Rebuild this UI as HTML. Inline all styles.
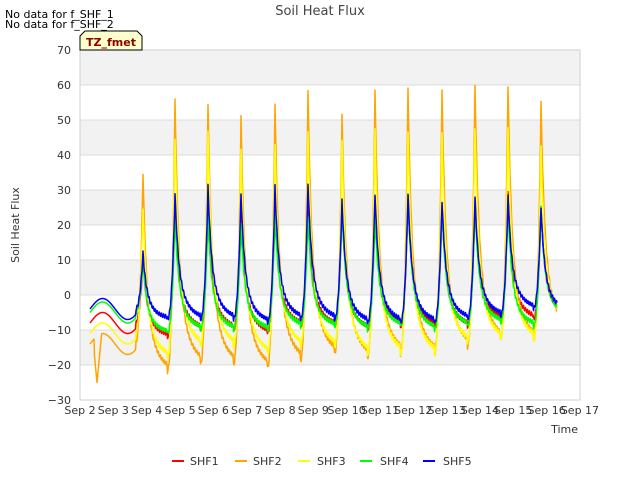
<!DOCTYPE html><html><head><style>body{margin:0;background:#fff}svg{font-family:"DejaVu Sans","Liberation Sans",sans-serif}</style></head><body>
<svg id="s" width="640" height="480" xmlns="http://www.w3.org/2000/svg">
<rect x="80" y="50" width="500" height="350" fill="#fff"/>
<g fill="#f2f2f2"><rect x="80" y="50" width="500" height="35"/><rect x="80" y="120" width="500" height="35"/><rect x="80" y="190" width="500" height="35"/><rect x="80" y="260" width="500" height="35"/><rect x="80" y="330" width="500" height="35"/></g>
<g stroke="#dcdcdc" stroke-width="1"><line x1="80" x2="580" y1="85" y2="85"/><line x1="80" x2="580" y1="120" y2="120"/><line x1="80" x2="580" y1="155" y2="155"/><line x1="80" x2="580" y1="190" y2="190"/><line x1="80" x2="580" y1="225" y2="225"/><line x1="80" x2="580" y1="260" y2="260"/><line x1="80" x2="580" y1="295" y2="295"/><line x1="80" x2="580" y1="330" y2="330"/><line x1="80" x2="580" y1="365" y2="365"/></g>
<rect x="80" y="50" width="500" height="350" fill="none" stroke="#d0d0d0"/>
<g id="lines" fill="none" stroke-width="1.5" stroke-linejoin="round"></g>
<g font-size="11" fill="#333" text-anchor="end"><text x="71" y="54">70</text><text x="71" y="89">60</text><text x="71" y="124">50</text><text x="71" y="159">40</text><text x="71" y="194">30</text><text x="71" y="229">20</text><text x="71" y="264">10</text><text x="71" y="299">0</text><text x="71" y="334">−10</text><text x="71" y="369">−20</text><text x="71" y="404">−30</text></g>
<g id="xt" font-size="11" fill="#333" text-anchor="middle"></g>
<text x="320" y="15" font-size="13" fill="#444" text-anchor="middle">Soil Heat Flux</text>
<text x="578" y="433" font-size="11" fill="#333" text-anchor="end">Time</text>
<text transform="translate(19,225) rotate(-90)" font-size="11" fill="#333" text-anchor="middle">Soil Heat Flux</text>
<text x="5" y="18" font-size="11" fill="#000">No data for f_SHF_1</text>
<text x="5" y="28" font-size="11" fill="#000">No data for f_SHF_2</text>
<path d="M80,50 L80,36 L85,31 L137,31 L142,36 L142,50 Z" fill="#ffffcc" stroke="#000" stroke-width="1"/>
<text x="111" y="46" font-size="11" font-weight="bold" fill="#8b0000" text-anchor="middle">TZ_fmet</text>
<g font-size="11" fill="#333">
<line x1="172" x2="184" y1="461" y2="461" stroke="#ff0000" stroke-width="2"/><text x="190" y="465">SHF1</text>
<line x1="235" x2="247" y1="461" y2="461" stroke="#ffa500" stroke-width="2"/><text x="253" y="465">SHF2</text>
<line x1="298" x2="310" y1="461" y2="461" stroke="#ffff00" stroke-width="2"/><text x="317" y="465">SHF3</text>
<line x1="360" x2="372" y1="461" y2="461" stroke="#00ff00" stroke-width="2"/><text x="380" y="465">SHF4</text>
<line x1="423" x2="435" y1="461" y2="461" stroke="#0000ff" stroke-width="2"/><text x="443" y="465">SHF5</text>
</g>
</svg>
<script>
var NS="http://www.w3.org/2000/svg";
var xt=document.getElementById('xt');
for(var d=2;d<=17;d++){var t=document.createElementNS(NS,'text');t.setAttribute('x',80+(d-2)*33.33);t.setAttribute('y',414);t.textContent='Sep '+d;xt.appendChild(t);}
function Y(v){return 295-v*3.5;}
var S=[
{c:"#ff0000",pk:[11,26,28,26,28,29,26,28,28,26,27,30,25],mn:[-12,-10,-10,-11,-9,-9,-10,-9,-9,-9,-7,-7,-6],pre:-8},
{c:"#ffa500",pk:[35,56,55,51,55,58,52,58,59,58,60,60,55],mn:[-22,-20,-20,-21,-19,-17,-18,-17,-17,-15,-13,-13,-10],pre:-14},
{c:"#ffff00",pk:[25,45,47,41,43,46,44,47,47,46,48,48,42],mn:[-18,-15,-15,-17,-15,-15,-17,-17,-17,-14,-13,-13,-8],pre:-11},
{c:"#00ff00",pk:[10,22,22,20,23,22,25,22,28,25,25,25,25],mn:[-11,-10,-10,-10,-9,-9,-10,-9,-10,-9,-8,-9,-6],pre:-5},
{c:"#0000ff",pk:[12,29,31,29,31,32,27,29,29,27,28,28,25],mn:[-7,-7,-7,-8,-7,-7,-8,-8,-8,-7,-6,-4,-5],pre:-4}];
var peaks=[143,175,208,241,275,308,342,375,408,442,475,508,541];
var g=document.getElementById('lines');
S.forEach(function(s,si){
 var pts=[];
 for(var x=90;x<=557;x+=0.5){
  var v;
  if(x<136){v=s.pre+3*Math.sin((x-90)/8)+(x>100&&x<125?Math.min(0,-s.pre)*0.8*Math.sin((x-100)/25*Math.PI):0);
   if(si==1&&x>94&&x<102)v=-25+Math.abs(x-97)*3;}
  else{
   var i=0;while(i<12&&x>peaks[i+1]-8)i++;
   var p=x-peaks[i];
   var pk=s.pk[i],mn=s.mn[i];
   if(p<-8){v=s.pre;}
   else if(p<0){var prev=i>0?s.mn[i-1]:s.pre;v=prev+(pk-prev)*Math.pow((p+8)/8,2.5);}
   else{v=mn+(pk-mn)*(0.65*Math.exp(-p/3.5)+0.35*Math.exp(-p/11));}
   v+=Math.sin(x*3.1+si)*0.6;
  }
  pts.push(x.toFixed(1)+','+Y(v).toFixed(1));
 }
 var pl=document.createElementNS(NS,'polyline');pl.setAttribute('points',pts.join(' '));pl.setAttribute('stroke',s.c);g.appendChild(pl);
});
</script>
</body></html>
